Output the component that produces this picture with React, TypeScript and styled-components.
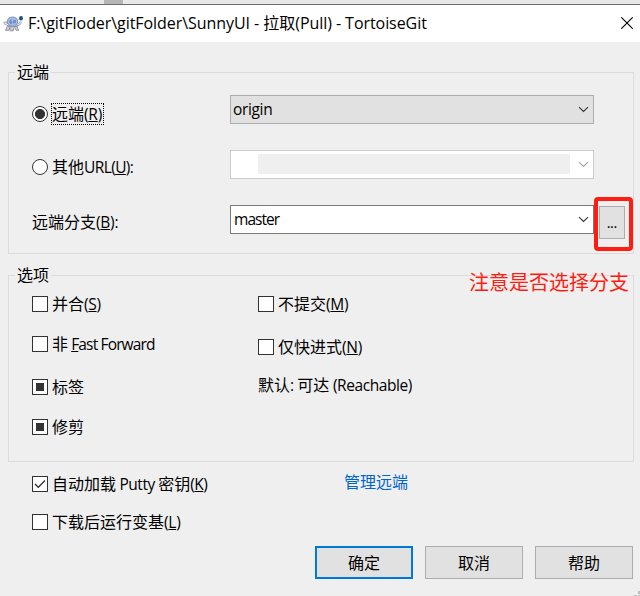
import React from 'react';
import styled, { createGlobalStyle, css } from 'styled-components';

const GlobalStyle = createGlobalStyle`
  * { box-sizing: border-box; }
  body {
    margin: 0;
    overflow: hidden;
    background: #efefef;
    color: #000;
    font: 16px/24px 'Open Sans', 'Noto Sans CJK SC', sans-serif;
  }
`;

/* ---------- text ---------- */

const Latin = styled.span<{ $size?: number; $track?: number }>`
  font-size: ${(p) => p.$size ?? 15.5}px;
  letter-spacing: ${(p) => p.$track ?? -0.25}px;
`;

const Mnemonic = styled.span`
  text-decoration: underline;
  text-decoration-thickness: 1px;
  text-underline-offset: 1px;
  text-decoration-skip-ink: none;
`;

const Label = styled.span`
  display: block;
  white-space: pre;
  line-height: 24px;
`;

/** Sets Latin runs a step smaller than the Chinese ones; "&X" underlines X. */
function Mixed({ text, size, track }: { text: string; size?: number; track?: number }) {
  const runs = text.match(/[\u3000-\u9fff]+|[^\u3000-\u9fff]+/g) ?? [];
  return (
    <>
      {runs.map((run, i) => {
        if (/[\u3000-\u9fff]/.test(run)) return <React.Fragment key={i}>{run}</React.Fragment>;
        const at = run.indexOf('&');
        return (
          <Latin key={i} $size={size} $track={track}>
            {at < 0 ? run : (
              <>
                {run.slice(0, at)}
                <Mnemonic>{run[at + 1]}</Mnemonic>
                {run.slice(at + 2)}
              </>
            )}
          </Latin>
        );
      })}
    </>
  );
}

/* ---------- window frame ---------- */

const Window = styled.div`
  position: relative;
  width: 640px;
  height: 596px;
  overflow: hidden;
  display: flex;
  flex-direction: column;
  background: #efefef;
`;

const Backdrop = styled.div`
  flex: none;
  height: 5px;
  padding-left: 104px;
  background: #e9e9e9;
  border-bottom: 1px solid #6c6c6c;
`;

const BackdropThumb = styled.div`
  width: 19px;
  height: 4px;
  background: #b6b6b6;
`;

const TitleBar = styled.header`
  flex: none;
  height: 37px;
  display: flex;
  align-items: center;
  padding: 0 7px 0 3px;
  background: #fff;
`;

const TitleIcon = styled.svg`
  display: block;
  width: 20px;
  height: 18px;
  margin-right: 5px;
`;

const Title = styled.h1`
  flex: 1;
  margin: -2px 0 0;
  font-size: 16px;
  font-weight: 400;
  line-height: 24px;
  white-space: pre;
`;

const CloseIcon = styled.svg`
  display: block;
  width: 12px;
  height: 12px;
  margin-top: -1px;
`;

/* ---------- groups and rows ---------- */

const Group = styled.fieldset<{ $top: number; $height: number }>`
  flex: none;
  display: flex;
  width: 626px;
  height: ${(p) => p.$height}px;
  margin: ${(p) => p.$top}px 0 0 8px;
  padding: 0;
  border: 1px solid #dcdcdc;
  min-width: 0;
`;

const Legend = styled.legend`
  height: 24px;
  margin: 0 0 -12px 6px;
  padding: 0 2px;
  line-height: 24px;
`;

const Body = styled.div`
  display: flex;
  height: 160px;
`;

const Column = styled.div<{ $width?: number; $left?: number }>`
  flex: none;
  width: ${(p) => (p.$width ? `${p.$width}px` : 'auto')};
  margin-left: ${(p) => p.$left ?? 0}px;
  display: flex;
  flex-direction: column;
`;

const Row = styled.label<{ $gap?: number }>`
  flex: none;
  height: 24px;
  margin-top: ${(p) => p.$gap ?? 0}px;
  display: flex;
  align-items: center;
`;

const Radio = styled.span<{ $on?: boolean }>`
  flex: none;
  width: 16px;
  height: 16px;
  margin-right: 4px;
  border: 1px solid #333;
  border-radius: 50%;
  background: ${(p) => (p.$on ? 'radial-gradient(circle, #333 4.7px, #fff 5.3px)' : '#fff')};
`;

const Box = styled.span`
  flex: none;
  display: flex;
  align-items: center;
  justify-content: center;
  width: 16px;
  height: 16px;
  margin-right: 4px;
  border: 1px solid #333;
  background: #fff;
`;

const Partial = styled.span`
  width: 8px;
  height: 8px;
  background: #333;
`;

const FocusRing = styled.span`
  display: block;
  height: 22px;
  margin-left: -1px;
  width: 53px;
  border: 1px dotted #000;
  white-space: pre;
  line-height: 20px;
`;

type ComboKind = 'list' | 'disabled' | 'edit';

const comboLook = {
  list: css`background: #e1e1e1; border-color: #adadad; padding-left: 2px;`,
  disabled: css`background: #fff; border-color: #ccc; padding-left: 27px;`,
  edit: css`background: #fff; border-color: #7a7a7a; padding-left: 3px;`,
};

const Combo = styled.div<{ $kind: ComboKind; $gap: number }>`
  flex: none;
  display: flex;
  align-items: center;
  justify-content: space-between;
  width: 364px;
  height: 29px;
  margin-top: ${(p) => p.$gap}px;
  padding-right: 4px;
  border: 1px solid;
  line-height: 26px;
  ${(p) => comboLook[p.$kind]}
`;

const ComboText = styled.span`
  padding-bottom: 2px;
`;

const Redacted = styled.span`
  width: 312px;
  height: 20px;
  margin-top: -1px;
  background: #efefef;
`;

const ChevronIcon = styled.svg`
  display: block;
  width: 11px;
  height: 7px;
`;

function Chevron({ color = '#333' }: { color?: string }) {
  return (
    <ChevronIcon viewBox="0 0 11 7">
      <path d="M1 1.2 5.5 5.5 10 1.2" fill="none" stroke={color} strokeWidth="1.1" />
    </ChevronIcon>
  );
}

const Button = styled.button<{ $primary?: boolean }>`
  width: 98px;
  height: 33px;
  padding: 0;
  border: ${(p) => (p.$primary ? '2px solid #0078d7' : '1px solid #adadad')};
  background: #e1e1e1;
  color: #000;
  font: inherit;
`;

const BrowseButton = styled(Button)`
  width: 26px;
  height: 33px;
  margin: 134px 0 0 5px;
  padding-top: 2px;
  font-size: 12px;
  font-weight: 600;
`;

const Below = styled.section`
  flex: none;
  display: flex;
  height: 84px;
`;

const Link = styled.a<{ $gap: number }>`
  height: 24px;
  margin-top: ${(p) => p.$gap}px;
  color: #0066cc;
`;

const Actions = styled.footer`
  flex: none;
  display: flex;
  justify-content: flex-end;
  gap: 12px;
  padding-right: 7px;
`;

/* ---------- overlays ---------- */

const Highlight = styled.div`
  position: absolute;
  left: 594px;
  top: 197px;
  width: 39px;
  height: 54px;
  border: 4px solid #ff1d12;
  border-radius: 4px;
`;

const Note = styled.div`
  position: absolute;
  left: 469px;
  top: 268px;
  color: #ff1d12;
  font-size: 20px;
  line-height: 30px;
  white-space: pre;
`;

const Grip = styled.svg`
  position: absolute;
  right: 0;
  bottom: 0;
  width: 6px;
  height: 6px;
`;

function Turtle() {
  return (
    <TitleIcon viewBox="0 0 20 18">
      <path d="M4 11.5 2.6 15.4h3.2L7 12.5M6.5 12.5l.8 3.4h3l.4-3M11.5 12.5l1.6 2.9h2.6L14 11.5" fill="#c9ccd2" stroke="#85888f" strokeWidth=".8" />
      <path d="M.6 7.4 3.4 6.6 4.4 8.6 2 9.8Z" fill="#dfe2e6" stroke="#8c9098" strokeWidth=".7" />
      <path d="M14.4 9.8c2 .1 3-1.2 3.3-3.4" fill="none" stroke="#9da1a9" strokeWidth="2.2" />
      <path d="M14.4 9.8c2 .1 3-1.2 3.3-3.4" fill="none" stroke="#eceef1" strokeWidth="1" />
      <ellipse cx="9.5" cy="6.6" rx="5.2" ry="4.6" fill="#a3bdec" stroke="#6a7fb3" strokeWidth=".8" />
      <path d="M3.8 10.4c3 2 8.4 2 11.4 0" fill="none" stroke="#8a92a5" strokeWidth="1.4" />
      <path d="M8.6 5.2H7v2.9h1.6V6.8M10.3 6.2v2.1M10.3 4.8v.6M12 5v3.3M11.3 6.2h1.5" fill="none" stroke="#4560a0" strokeWidth=".7" />
      <ellipse cx="18" cy="3.2" rx="1.9" ry="2.3" fill="#1b4f70" />
      <path d="M15.2 3.6 16.6 5.2" stroke="#8c9098" strokeWidth=".9" />
    </TitleIcon>
  );
}

export default function App() {
  return (
    <Window>
      <GlobalStyle />
      <Backdrop><BackdropThumb /></Backdrop>
      <TitleBar>
        <Turtle />
        <Title><Mixed size={16} track={-0.06} text="F:\gitFloder\gitFolder\SunnyUI - 拉取(Pull) - TortoiseGit" /></Title>
        <CloseIcon viewBox="0 0 12 12">
          <path d="M.3.3 11.7 11.7M11.7.3.3 11.7" stroke="#000" strokeWidth="1.1" />
        </CloseIcon>
      </TitleBar>

      <Group $top={18} $height={194}>
        <Legend>远端</Legend>
        <Body>
          <Column $left={23} $width={198}>
            <Row $gap={30}>
              <Radio $on />
              <FocusRing><Mixed text="远端(&R)" /></FocusRing>
            </Row>
            <Row $gap={29}>
              <Radio />
              <Label><Mixed track={-0.6} text="其他URL(&U):" /></Label>
            </Row>
            <Row $gap={31}><Label><Mixed text="远端分支(&B):" /></Label></Row>
          </Column>
          <Column>
            <Combo $kind="list" $gap={23}><ComboText><Mixed track={-0.35} text="origin" /></ComboText><Chevron /></Combo>
            <Combo $kind="disabled" $gap={26}><Redacted /><Chevron color="#a3a3a3" /></Combo>
            <Combo $kind="edit" $gap={26}><ComboText><Mixed track={-0.95} text="master" /></ComboText><Chevron /></Combo>
          </Column>
          <BrowseButton>...</BrowseButton>
        </Body>
      </Group>

      <Group $top={9} $height={199}>
        <Legend>选项</Legend>
        <Body>
          <Column $left={23} $width={226}>
            <Row $gap={17}><Box /><Label><Mixed text="并合(&S)" /></Label></Row>
            <Row $gap={16}><Box /><Label><Mixed track={-0.85} text="非 &Fast Forward" /></Label></Row>
            <Row $gap={19}><Box><Partial /></Box><Label>标签</Label></Row>
            <Row $gap={16}><Box><Partial /></Box><Label>修剪</Label></Row>
          </Column>
          <Column>
            <Row $gap={17}><Box /><Label><Mixed text="不提交(&M)" /></Label></Row>
            <Row $gap={19}><Box /><Label><Mixed text="仅快进式(&N)" /></Label></Row>
            <Row $gap={14}><Label><Mixed track={-0.42} text="默认: 可达 (Reachable)" /></Label></Row>
          </Column>
        </Body>
      </Group>

      <Below>
        <Column $left={32} $width={312}>
          <Row $gap={10}>
            <Box>
              <svg width="12" height="10" viewBox="0 0 12 10">
                <path d="M1 5 4.3 8.3 11 1.5" fill="none" stroke="#333" strokeWidth="1.3" />
              </svg>
            </Box>
            <Label><Mixed track={-0.5} text="自动加载 Putty 密钥(&K)" /></Label>
          </Row>
          <Row $gap={14}><Box /><Label><Mixed text="下载后运行变基(&L)" /></Label></Row>
        </Column>
        <Link $gap={8}>管理远端</Link>
      </Below>

      <Actions>
        <Button $primary>确定</Button>
        <Button>取消</Button>
        <Button>帮助</Button>
      </Actions>

      <Highlight />
      <Note>注意是否选择分支</Note>
      <Grip viewBox="0 0 6 6">
        <path d="M4 1h2v3H4zM0 5h3v1H0zM4 5h2v1H4z" fill="#bcbcbc" />
      </Grip>
    </Window>
  );
}
